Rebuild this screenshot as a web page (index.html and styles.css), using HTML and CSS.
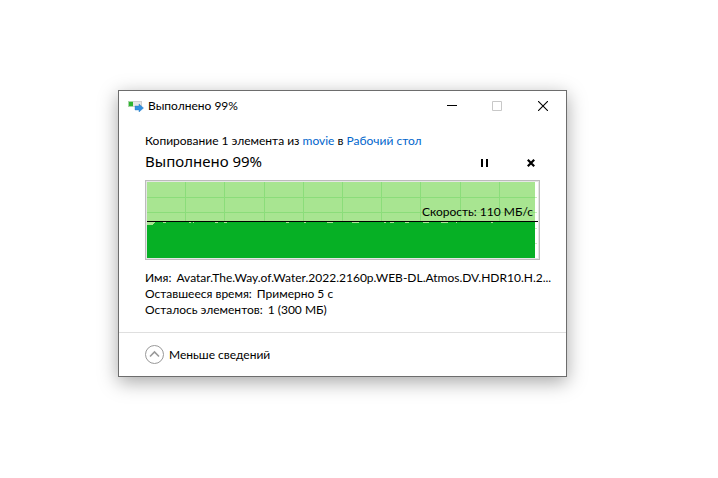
FILE: index.html
```html
<!DOCTYPE html>
<html lang="ru">
<head>
<meta charset="utf-8">
<meta name="viewport" content="width=device-width, initial-scale=1">
<title>Выполнено 99%</title>
<link rel="stylesheet" href="styles.css">
</head>
<body>
<main class="dialog">
  <header class="titlebar">
    <svg class="titlebar-icon" width="16" height="12" viewBox="0 0 16 12" aria-hidden="true">
      <path d="M0 1h14v6H0z" fill="#d0d0d0"/>
      <path d="M5 2h8v4H5z" fill="#e6e6e6"/>
      <path d="M0 1h5v6H0z" fill="#a9d5a9"/>
      <path d="M1 2h4v4H1z" fill="#2fb52f"/>
      <path d="M7 6h4V4l4.500 4L11 12v-2H7z" fill="#3390e0" stroke="#2273bd" stroke-width=".4"/>
    </svg>
    <h1 class="title">Выполнено 99%</h1>
    <div class="window-buttons">
      <button class="window-button" type="button" aria-label="Свернуть">
        <svg width="12" height="11" viewBox="0 0 12 11"><path d="M2 5h10v1H2z"/></svg>
      </button>
      <button class="window-button" type="button" aria-label="Развернуть" disabled>
        <svg width="10" height="10" viewBox="0 0 10 10"><path d="M.5.5h9v9h-9z" fill="none" stroke="#c8c8c8"/></svg>
      </button>
      <button class="window-button" type="button" aria-label="Закрыть">
        <svg width="10" height="10" viewBox="0 0 10 10"><path d="M0 0l10 10M10 0L0 10" fill="none" stroke="#000" stroke-width="1.100"/></svg>
      </button>
    </div>
  </header>
  <section class="content">
    <p class="summary">Копирование 1 элемента из <a href="#movie">movie</a> в <a href="#desktop">Рабочий стол</a></p>
    <div class="status">
      <h2 class="status-text">Выполнено 99%</h2>
      <button class="action" type="button" aria-label="Пауза">
        <svg width="8" height="8" viewBox="0 0 8 8"><path d="M1 0h2v8H1zM6 0h2v8H6z"/></svg>
      </button>
      <button class="action" type="button" aria-label="Отмена">
        <svg width="8" height="8" viewBox="0 0 8 8"><path d="M.8.8l6.400 6.400M7.200.8L.8 7.200" fill="none" stroke="#000" stroke-width="2.200"/></svg>
      </button>
    </div>
    <div class="chart">
      <svg class="plot" viewBox="0 0 391 76" preserveAspectRatio="none" shape-rendering="crispEdges" aria-hidden="true">
        <path d="M388 15h2v1h-2zM388 30h2v1h-2zM388 46h2v1h-2zM388 61h2v1h-2z" fill="#c9efc0"/>
        <path d="M0 0h388v76H0z" fill="#a8e591"/>
        <path d="M38 0h1v39h-1zM77 0h1v39h-1zM117 0h1v39h-1zM156 0h1v39h-1zM195 0h1v39h-1zM234 0h1v39h-1zM273 0h1v39h-1zM313 0h1v39h-1zM352 0h1v39h-1zM0 15h388v1H0zM0 30h388v1H0z" fill="#8bdd7a"/>
        <path d="M0 40h388v36H0z" fill="#06b025"/>
        <path d="M0 40h8v1H7v1H6v1H0zM16 40h3v1h-3zM42 40h2v1h-2zM46 40h1v1h-1zM68 40h3v1h-3zM77 40h3v1h-3zM139 40h3v1h-3zM157 40h2v1h-2zM180 40h6v1h-6zM205 40h7v1h-7zM237 40h2v1h-2zM243 40h4v1h-4zM258 40h4v1h-4zM276 40h6v1h-6zM294 40h7v1h-7zM309 40h1v1h-1zM344 40h2v1h-2z" fill="#a8e591"/>
        <path d="M0 39h391v1H0z"/>
      </svg>
      <span class="speed">Скорость: 110 МБ/с</span>
    </div>
    <dl class="details">
      <div class="detail"><dt>Имя:</dt><dd>Avatar.The.Way.of.Water.2022.2160p.WEB-DL.Atmos.DV.HDR10.H.2...</dd></div>
      <div class="detail"><dt>Оставшееся время:</dt><dd>Примерно 5 с</dd></div>
      <div class="detail"><dt>Осталось элементов:</dt><dd>1 (300 МБ)</dd></div>
    </dl>
  </section>
  <footer class="footer">
    <button class="toggle" type="button">
      <svg width="20" height="20" viewBox="0 0 20 20" fill="none" aria-hidden="true">
        <circle cx="9.500" cy="9.500" r="9" stroke="#999"/>
        <path d="M5 11.500l4.500-4.500 4.500 4.500" stroke="#999" stroke-width="1.600"/>
      </svg>
      Меньше сведений
    </button>
  </footer>
</main>
</body>
</html>
```
FILE: styles.css
```css
* {
  box-sizing: border-box;
}

body {
  margin: 0;
  padding: 90px 151px 48px 118px;
  background: #fff;
  color: #000;
  font: 12px/16px "Segoe UI", Lato, "Noto Sans", sans-serif;
}

h1, h2, p, dl, dd {
  margin: 0;
  font-weight: 400;
}

button {
  display: flex;
  align-items: center;
  justify-content: center;
  padding: 0;
  border: 0;
  background: none;
  color: inherit;
  font: inherit;
}

a {
  color: #0066cc;
  text-decoration: none;
}

.dialog {
  border: 1px solid #6d6d6d;
  background: #fff;
  box-shadow: 0 5px 18px rgba(0, 0, 0, 0.35);
}

.titlebar {
  display: flex;
  align-items: center;
  gap: 4px;
  height: 29px;
  padding-left: 9px;
}

.title {
  flex: 1;
  font-size: 12px;
}

.window-buttons {
  display: flex;
}

.window-button {
  width: 46px;
  height: 29px;
}

.content {
  padding: 13px 26px 14px;
}

.summary {
  white-space: nowrap;
}

.status {
  display: flex;
  height: 28px;
  margin-bottom: 3px;
}

.status-text {
  flex: 1;
  font-family: "Segoe UI", "Noto Sans", sans-serif;
  font-size: 15px;
  line-height: 24px;
}

.action {
  width: 18px;
  height: 28px;
}

.action + .action {
  margin-left: 29px;
}

.chart {
  position: relative;
  height: 80px;
  border: 1px solid #bcbcbc;
  padding: 1px;
  background: #fff;
  box-shadow: inset 0 0 0 1px #e6e6e6;
}

.plot {
  display: block;
  width: 100%;
  height: 76px;
}

.speed {
  position: absolute;
  right: 6px;
  top: 23px;
}

.details {
  margin-top: 10px;
}

.detail {
  display: flex;
  gap: 5px;
  white-space: nowrap;
}

.footer {
  display: flex;
  align-items: center;
  height: 44px;
  padding: 0 26px;
  border-top: 1px solid #dfdfdf;
}

.toggle {
  gap: 4px;
}
```
